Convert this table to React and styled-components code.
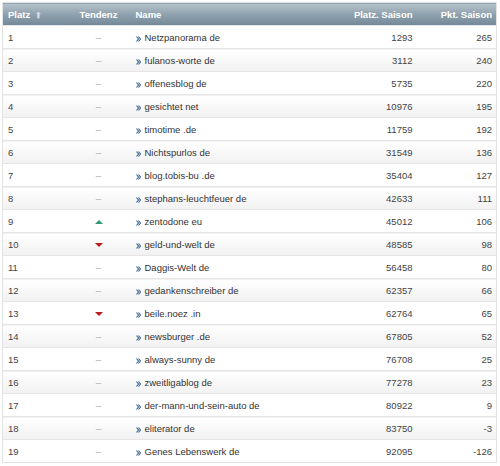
import React from 'react';
import styled, { createGlobalStyle } from 'styled-components';

const GlobalStyle = createGlobalStyle`
  body {
    margin: 0;
    background: #fff;
    font-family: "Liberation Sans", Arial, sans-serif;
  }
`;

const Wrap = styled.div`
  padding: 2px 4px 0 2px;
`;

const Table = styled.table`
  width: 494px;
  border-collapse: collapse;
  table-layout: fixed;
  font-size: 9.5px;
  color: #444;
  border: 1px solid #e2e2e2;
`;

const Th = styled.th`
  height: 22px;
  padding: 0 ${({ last }) => (last ? '4px' : '5px')};
  text-align: ${({ align }) => align || 'left'};
  color: #fff;
  font-weight: bold;
  font-size: 9.5px;
  background: linear-gradient(to bottom, #b7c3cc 0%, #8fa1ae 50%, #738898 100%);
  white-space: nowrap;
`;

const Row = styled.tr`
  background: ${({ odd }) =>
    odd ? '#fff' : 'linear-gradient(to bottom, #ffffff 0%, #f1f1f1 100%)'};
  border-top: 1px solid #e6e6e6;
`;

const Td = styled.td`
  height: 22px;
  padding: 0 ${({ last }) => (last ? '4px' : '5px')};
  text-align: ${({ align }) => align || 'left'};
  white-space: nowrap;
  overflow: hidden;
`;

const SortIcon = styled.span`
  display: inline-block;
  margin-left: 5px;
  color: #d5dde3;
  font-size: 8px;
`;

const Dash = styled.span`
  color: #aaa;
`;

const Tri = styled.span`
  display: inline-block;
  width: 0;
  height: 0;
  border-left: 4px solid transparent;
  border-right: 4px solid transparent;
  ${({ up }) =>
    up ? 'border-bottom: 4px solid #2e9c70;' : 'border-top: 4px solid #b81c1c;'}
  vertical-align: middle;
`;

const Link = styled.span`
  color: #333;
`;

const ArrowSvg = styled.svg`
  width: 5px;
  height: 6px;
  margin-right: 4px;
  vertical-align: -1px;
`;

const Arrow = () => (
  <ArrowSvg viewBox="0 0 5 6">
    <path d="M0.5 0.5 L2.5 3 L0.5 5.5" fill="none" stroke="#3d6a96" strokeWidth="1.2" />
    <path d="M2.5 0.5 L4.5 3 L2.5 5.5" fill="none" stroke="#3d6a96" strokeWidth="1.2" />
  </ArrowSvg>
);

const data = [
  ['Netzpanorama de', 1293, 265, 0],
  ['fulanos-worte de', 3112, 240, 0],
  ['offenesblog de', 5735, 220, 0],
  ['gesichtet net', 10976, 195, 0],
  ['timotime .de', 11759, 192, 0],
  ['Nichtspurlos de', 31549, 136, 0],
  ['blog.tobis-bu .de', 35404, 127, 0],
  ['stephans-leuchtfeuer de', 42633, 111, 0],
  ['zentodone eu', 45012, 106, 1],
  ['geld-und-welt de', 48585, 98, -1],
  ['Daggis-Welt de', 56458, 80, 0],
  ['gedankenschreiber de', 62357, 66, 0],
  ['beile.noez .in', 62764, 65, -1],
  ['newsburger .de', 67805, 52, 0],
  ['always-sunny de', 76708, 25, 0],
  ['zweitligablog de', 77278, 23, 0],
  ['der-mann-und-sein-auto de', 80922, 9, 0],
  ['eliterator de', 83750, -3, 0],
  ['Genes Lebenswerk de', 92095, -126, 0],
];

const trend = (t) => {
  if (t > 0) return <Tri up />;
  if (t < 0) return <Tri />;
  return <Dash>–</Dash>;
};

export default function App() {
  return (
    <Wrap>
      <GlobalStyle />
      <Table>
        <colgroup>
          <col style={{ width: 64 }} />
          <col style={{ width: 64 }} />
          <col style={{ width: 154 }} />
          <col style={{ width: 133 }} />
          <col style={{ width: 79 }} />
        </colgroup>
        <thead>
          <tr>
            <Th>
              Platz<SortIcon>⬆</SortIcon>
            </Th>
            <Th align="center">Tendenz</Th>
            <Th>Name</Th>
            <Th align="right">Platz. Saison</Th>
            <Th align="right" last>Pkt. Saison</Th>
          </tr>
        </thead>
        <tbody>
          {data.map(([name, platz, pkt, t], i) => (
            <Row key={name} odd={i % 2 === 0}>
              <Td>{i + 1}</Td>
              <Td align="center">{trend(t)}</Td>
              <Td>
                <Arrow />
                <Link>{name}</Link>
              </Td>
              <Td align="right">{platz}</Td>
              <Td align="right" last>{pkt}</Td>
            </Row>
          ))}
        </tbody>
      </Table>
    </Wrap>
  );
}
